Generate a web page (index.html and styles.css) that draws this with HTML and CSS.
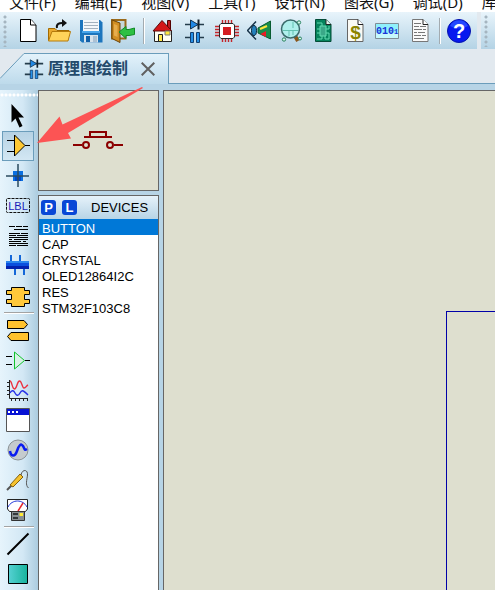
FILE: index.html
```html
<!DOCTYPE html>
<html lang="zh-CN">
  <head>
    <meta charset="UTF-8" />
    <meta name="viewport" content="width=device-width, initial-scale=1.0" />
    <title>原理图绘制</title>
    <link rel="stylesheet" href="styles.css">
  </head>
  <body>
    <nav class="menubar">
      <a href="#">文件(F)</a>
      <a href="#">编辑(E)</a>
      <a href="#">视图(V)</a>
      <a href="#">工具(T)</a>
      <a href="#">设计(N)</a>
      <a href="#">图表(G)</a>
      <a href="#">调试(D)</a>
      <a href="#">库(L)</a>
    </nav>

    <div class="toolbars">
      <div class="toolbar">
        <span class="grip"></span>
        <button class="tool" aria-label="新建">
          <svg class="icon" viewBox="0 0 24 24">
            <path d="M5.500 .5H16l5 5.500V22.500H5.500Z" fill="#fff" stroke="#000"/>
            <path d="M15.500 .5V6H21" fill="#fff" stroke="#000"/>
          </svg>
        </button>
        <button class="tool" aria-label="打开">
          <svg class="icon" viewBox="0 0 24 24">
            <path d="M1.500 21.500V9.500H8L10 11.500H22V14" fill="#e9a92d" stroke="#a46a00"/>
            <path d="M1.500 22L5 12.500H23.500L21 22Z" fill="#ffd35a" stroke="#b57a0b"/>
            <path d="M10 9C9 5 12 3.500 17 4" fill="none" stroke="#111" stroke-width="2"/>
            <path d="M15 0L20 4L15 8Z" fill="#111"/>
          </svg>
        </button>
        <button class="tool" aria-label="保存">
          <svg class="icon" viewBox="0 0 24 24">
            <path d="M1 1H21L23.500 3.500V23.500H3L1 21.500Z" fill="#1c75bd"/>
            <path d="M4 1H20V13H4Z" fill="#f3f7fa"/>
            <path d="M5 3.500H19M5 6.500H19M5 9.500H19" stroke="#a2b1be"/>
            <path d="M3 12H21V14H3Z" fill="#49a5ea"/>
            <path d="M5 16H19V23.500H5Z" fill="#d8e3ec"/>
            <path d="M7 17H11V23H7Z" fill="#1260a8"/>
            <path d="M14 17H18V23H14Z" fill="#acc1d3"/>
          </svg>
        </button>
        <button class="tool" aria-label="关闭">
          <svg class="icon" viewBox="0 0 24 24">
            <path d="M1 1H14.500V19.500H1Z" fill="#c5d8d9" stroke="#9a6a1c" stroke-width="2"/>
            <path d="M1 1L9 4V23.500L1 19.500Z" fill="#d18e22" stroke="#6d4508"/>
            <path d="M3 5L6.500 6.500V18L3 16.500Z" fill="#e6ad4c"/>
            <path d="M8 13L15 7.500V10.500H18L23.500 9V15.500L18 16.500H15V19.500Z" fill="#2dc043" stroke="#128a26"/>
          </svg>
        </button>
        <span class="divider"></span>
        <button class="tool" aria-label="主页">
          <svg class="icon" viewBox="0 0 24 24">
            <path d="M16.500 1.500H19.500V10H16.500Z" fill="#c11c20" stroke="#500"/>
            <path d="M3.500 12V22.500H20.500V12L12 5Z" fill="#fffef2" stroke="#222"/>
            <path d="M2 12L11 1.500L20.500 11.500L15 12Z" fill="#d41619" stroke="#5a0b0b"/>
            <path d="M7.500 15.500H11.500V22.500H7.500Z" fill="#ffe94a" stroke="#222"/>
            <path d="M14 12H19V16H14Z" fill="#ffe93a" stroke="#777"/>
          </svg>
        </button>
        <button class="tool" aria-label="原理图绘制">
          <svg class="icon" viewBox="0 0 24 24">
            <path d="M2 5.500H21M2 18.500H9M14 18.500H21" stroke="#243c4b" stroke-width="1.500"/>
            <path d="M7.500 1V10L15 5.500Z" fill="#2188e4" stroke="#123352"/>
            <path d="M15.500 .5V10.500" stroke="#12212d" stroke-width="2"/>
            <path d="M7.500 13.500H10.500V23.500H7.500ZM13.500 13.500H16.500V23.500H13.500Z" fill="#2590e8" stroke="#123f70"/>
          </svg>
        </button>
        <button class="tool" aria-label="PCB 设计">
          <svg class="icon" viewBox="0 0 24 24">
            <path d="M7.500 1V23M10.500 1V23M13.500 1V23M16.500 1V23M0 7.500H24M0 10.500H24M0 13.500H24M0 16.500H24" stroke="#c4262b" stroke-width="1.400"/>
            <path d="M6 4.500H18L19.500 6V18L18 19.500H6L4.500 18V6Z" fill="#fff" stroke="#27272a"/>
            <path d="M8 8H16V16H8Z" fill="#d41d22"/>
          </svg>
        </button>
        <button class="tool" aria-label="3D 观察器">
          <svg class="icon" viewBox="0 0 24 24">
            <path d="M9 2.500L.5 11.500L9 20.500" fill="#cfe9f8" stroke="#163247" stroke-width="1.500"/>
            <ellipse cx="7" cy="11.500" rx="2.500" ry="5" fill="#2481bd" stroke="#0a253a"/>
            <path d="M11 9L23.500 2V20L11 14Z" fill="#188d4c" stroke="#085c31"/>
            <path d="M13 10L20 7" stroke="#ffe53a" stroke-width="2"/>
            <path d="M13.500 15L19 12V18Z" fill="#ed1b24"/>
          </svg>
        </button>
        <button class="tool" aria-label="Gerber 查看器">
          <svg class="icon" viewBox="0 0 24 24">
            <path d="M16 17L19 22" stroke="#8a571d" stroke-width="4"/>
            <circle cx="11.500" cy="10" r="9" fill="#b0f0ec" stroke="#3b6b6b" stroke-width="1.500"/>
            <path d="M4 11.500H19M10 11.500V17M14 3V9M14 11.500V16" fill="none" stroke="#63c1b0"/>
            <g fill="#d9f5e8" stroke="#278361">
              <circle cx="20" cy="3.500" r="1.700"/>
              <circle cx="5" cy="20.500" r="1.700"/>
              <circle cx="21" cy="19.500" r="1.500"/>
            </g>
          </svg>
        </button>
        <button class="tool" aria-label="设计浏览器">
          <svg class="icon" viewBox="0 0 24 24">
            <path d="M4.500 .5H15L20 5.500V22.500H4.500Z" fill="#06845d" stroke="#034c37"/>
            <path d="M9 7H15V17H9Z" fill="#3aa888"/>
            <path d="M9 7H15V17H9ZM6 4H11V7M6 10H9M15 10H18V7M6 14H9M11 17V20H6M14 17V20H18V14H15" fill="none" stroke="#62dcb2"/>
            <path d="M15 .5V5.500H20" fill="#e6f6ee" stroke="#222"/>
          </svg>
        </button>
        <button class="tool" aria-label="物料清单">
          <svg class="icon" viewBox="0 0 24 24">
            <path d="M4.500 .5H15L20 5.500V22.500H4.500Z" fill="#fafaf4" stroke="#666"/>
            <path d="M15 .5V5.500H20" fill="#fff" stroke="#222"/>
            <text class="dollar" x="12.500" y="20">$</text>
          </svg>
        </button>
        <button class="tool" aria-label="源代码">
          <svg class="icon" viewBox="0 0 24 24">
            <path d="M.5 4.500H23.500V19.500H.5Z" fill="#8ff0fb" stroke="#7e8d96"/>
            <path d="M1 14H23V19H1Z" fill="#c6f8fc"/>
            <text class="bits" x="1" y="15">010<tspan class="bits-small">1</tspan></text>
          </svg>
        </button>
        <button class="tool" aria-label="项目笔记">
          <svg class="icon" viewBox="0 0 24 24">
            <path d="M5.500 .5H16L21 5.500V22.500H5.500Z" fill="#fafafa" stroke="#777"/>
            <path d="M16 .5V5.500H21" fill="#fff" stroke="#222"/>
            <path d="M7 4.500H14M7 7.500H12M13 7.500H19M7 10.500H15M16 10.500H19M7 13.500H10M11 13.500H18M7 16.500H14M15 16.500H19M7 19.500H17" stroke="#777"/>
          </svg>
        </button>
        <span class="divider"></span>
        <button class="tool" aria-label="帮助">
          <svg class="icon" viewBox="0 0 24 24">
            <circle cx="12" cy="12" r="11.500" fill="#0718ef" stroke="#0414ac"/>
            <path d="M3 7A10 10 0 0 1 21 7Q12 12 3 7" fill="#2448ff"/>
            <text class="question" x="12" y="19">?</text>
          </svg>
        </button>
      </div>
      <div class="toolbar toolbar-next">
        <span class="grip"></span>
      </div>
    </div>

    <div class="tabbar">
      <svg class="tab-slope" viewBox="0 0 24 31">
        <path d="M0 25.500L24 .5V31H0Z" fill="url(#tabFill)"/>
        <path d="M0 25.500L24 .5" stroke="#6b9dbb"/>
        <defs>
          <linearGradient id="tabFill" x1="0" y1="0" x2="0" y2="1">
            <stop offset="0" stop-color="#e3f2fb"/>
            <stop offset="1" stop-color="#bddaeb"/>
          </linearGradient>
        </defs>
      </svg>
      <div class="tab">
        <svg class="tab-icon" viewBox="0 0 24 24">
          <path d="M1 5.500H23M1 18.500H9M15 18.500H23" stroke="#243c4b" stroke-width="2"/>
          <path d="M7.500 1V10L15 5.500Z" fill="#2188e4" stroke="#123352"/>
          <path d="M16 .5V10.500" stroke="#12212d" stroke-width="2"/>
          <path d="M7.500 13.500H10.500V23.500H7.500ZM13.500 13.500H16.500V23.500H13.500Z" fill="#2590e8" stroke="#123f70"/>
        </svg>
        <span class="tab-title">原理图绘制</span>
        <button class="tab-close" aria-label="关闭标签">
          <svg viewBox="0 0 14 14"><path d="M.7 .7L13.300 13.300M13.300 .7L.7 13.300" stroke="#606060" stroke-width="2"/></svg>
        </button>
      </div>
      <div class="tab-rest"></div>
    </div>

    <main class="workspace">
      <aside class="toolbox">
        <button class="mode" aria-label="选择模式">
          <svg class="icon" viewBox="0 0 24 24"><path d="M5.500 0V18.500L9.500 14.500L13.500 23.500L16.500 22L12.500 13.500H18Z" fill="#000"/></svg>
        </button>
        <button class="mode active" aria-label="元件模式">
          <svg class="icon" viewBox="0 0 24 24">
            <path d="M1 6.500H8M1 17.500H8M19 11.500H24" stroke="#000"/>
            <path d="M8.500 1V22L19 11.500Z" fill="#ffc933" stroke="#000"/>
          </svg>
        </button>
        <button class="mode" aria-label="结点模式">
          <svg class="icon" viewBox="0 0 24 24">
            <path d="M7 7H17V17H7Z" fill="#0a6fe0"/>
            <path d="M9 12H15V17H9Z" fill="#0047c4"/>
            <path d="M0 12H23M12 0V23" stroke="#2b4b5f" stroke-width="1.500"/>
          </svg>
        </button>
        <button class="mode" aria-label="连线标号模式">
          <svg class="icon" viewBox="0 0 24 24">
            <rect x=".5" y="4.500" width="23" height="14" rx="1" fill="none" stroke="#111" stroke-dasharray="3 1"/>
            <text class="lbl" x="12" y="16">LBL</text>
          </svg>
        </button>
        <button class="mode" aria-label="文本脚本模式">
          <svg class="icon" viewBox="0 0 24 24">
            <path d="M3 2.500H9M10 2.500H16M17 2.500H22M8 5.500H22M3 9.500H14M15 9.500H22M3 11.500H10M11 11.500H22M3 13.500H22M3 15.500H6M8 15.500H22M3 17.500H15M17 17.500H20M3 19.500H22M3 21.500H10M11 21.500H22" stroke="#000"/>
          </svg>
        </button>
        <button class="mode" aria-label="总线模式">
          <svg class="icon" viewBox="0 0 24 24">
            <path d="M5 1V8M14 1V8M9 14V21M18 14V21" stroke="#1467d8" stroke-width="2"/>
            <path d="M0 7H23V15H0Z" fill="#0b4fdd"/>
            <path d="M0 7H23V9H0Z" fill="#2b86ee"/>
            <path d="M0 12H23V15H0Z" fill="#0321ad"/>
          </svg>
        </button>
        <button class="mode" aria-label="子电路模式">
          <svg class="icon" viewBox="0 0 24 24">
            <path d="M5.500 3.500H18.500V6.500H23.500V10.500H18.500V15.500H23.500V19.500H18.500V22.500H5.500V19.500H.5V15.500H5.500V10.500H.5V6.500H5.500Z" fill="#ffc83a" stroke="#000"/>
          </svg>
        </button>
        <span class="rule"></span>
        <button class="mode" aria-label="终端模式">
          <svg class="icon" viewBox="0 0 24 24">
            <path d="M1.500 2.500H18L21.500 6.500L18 10.500H1.500ZM22.500 14.500H5L1.500 18.500L5 22.500H22.500Z" fill="#ffc22e" stroke="#000"/>
          </svg>
        </button>
        <button class="mode" aria-label="器件引脚模式">
          <svg class="icon" viewBox="0 0 24 24">
            <path d="M0 8.500H6M0 16.500H6M19 12.500H24" stroke="#000"/>
            <path d="M8.500 4V21L18.500 12.500Z" fill="#d7f1e5" stroke="#12c32d"/>
          </svg>
        </button>
        <button class="mode" aria-label="图表模式">
          <svg class="icon" viewBox="0 0 24 24">
            <path d="M3.500 2V20.500H22M1 4.500H3M1 8.500H3M1 12.500H3M1 16.500H3M5.500 21V23M9.500 21V23M13.500 21V23M17.500 21V23M21.500 21V23" fill="none" stroke="#222"/>
            <path d="M4 3C6 3 6 11 8.500 11S11 3 13.500 3S16 10 18 10S20 8 22 7" fill="none" stroke="#eb3340" stroke-width="1.400"/>
            <path d="M4 15C6 11 8 13 9 15S12 19 14 15S18 13 22 17" fill="none" stroke="#2732e8" stroke-width="1.400"/>
          </svg>
        </button>
        <button class="mode" aria-label="弹出窗口模式">
          <svg class="icon" viewBox="0 0 24 24">
            <path d="M.5 .5H23.500V23.500H.5Z" fill="#fff" stroke="#555"/>
            <path d="M1 1H23V7H1Z" fill="#0712d4"/>
            <path d="M2 3H4V5H2ZM6 3H8V5H6ZM10 3H12V5H10Z" fill="#fff"/>
          </svg>
        </button>
        <button class="mode" aria-label="激励源模式">
          <svg class="icon" viewBox="0 0 24 24">
            <circle cx="12" cy="12" r="10" fill="#c5cbce" stroke="#8b9296"/>
            <path d="M4 13C5 19 9 19 11 13S15 5 17 8S18 13 21 11" fill="none" stroke="#0a1cf0" stroke-width="2.500"/>
          </svg>
        </button>
        <button class="mode" aria-label="探针模式">
          <svg class="icon" viewBox="0 0 24 24">
            <path d="M1 22L7 16" stroke="#555" stroke-width="2"/>
            <path d="M4 17L14 6L17 9L7 19Z" fill="#f5c22e" stroke="#83610f"/>
            <path d="M15 7C16 1 22 1 21.500 7C21 12 19 17 22.500 20" fill="none" stroke="#555"/>
          </svg>
        </button>
        <button class="mode" aria-label="仪表模式">
          <svg class="icon" viewBox="0 0 24 24">
            <path d="M1.500 1.500H21.500V11L19.500 13.500H3.500L1.500 11Z" fill="#fff" stroke="#222"/>
            <path d="M2 9C6 1 17 1 21 9" fill="none" stroke="#1b32d8"/>
            <path d="M12 13L17 5" stroke="#e8292d" stroke-width="1.500"/>
            <path d="M5.500 13.500H18.500V22.500H5.500Z" fill="#888f92" stroke="#333"/>
            <path d="M7 15H12V17H7ZM7 19H12V21H7Z" fill="#33383b"/>
            <path d="M13.500 15H17V18H13.500Z" fill="#ffeb36"/>
          </svg>
        </button>
        <span class="rule"></span>
        <button class="mode" aria-label="二维直线">
          <svg class="icon" viewBox="0 0 24 24"><path d="M1.500 22.500L22.500 1.500" stroke="#000" stroke-width="2"/></svg>
        </button>
        <button class="mode" aria-label="二维方框">
          <svg class="icon" viewBox="0 0 24 24">
            <defs>
              <linearGradient id="boxFill" x1="0" y1="0" x2="1" y2="0">
                <stop offset="0" stop-color="#56d1d3"/>
                <stop offset="1" stop-color="#17b39c"/>
              </linearGradient>
            </defs>
            <path d="M2.500 2.500H21.500V21.500H2.500Z" fill="url(#boxFill)" stroke="#000"/>
          </svg>
        </button>
      </aside>

      <section class="side">
        <div class="preview">
          <svg class="preview-part" viewBox="0 0 52 20">
            <g fill="none" stroke="#8b0000" stroke-width="2">
              <path d="M0 14H9M41 14H50M11 6H39M17 6V1H33V6"/>
              <circle cx="13" cy="14" r="3"/>
              <circle cx="37" cy="14" r="3"/>
            </g>
          </svg>
        </div>
        <div class="devices">
          <div class="devices-head">
            <button class="badge">P</button>
            <button class="badge">L</button>
            <span class="devices-title">DEVICES</span>
          </div>
          <ul class="device-list">
            <li><button class="device selected">BUTTON</button></li>
            <li><button class="device">CAP</button></li>
            <li><button class="device">CRYSTAL</button></li>
            <li><button class="device">OLED12864I2C</button></li>
            <li><button class="device">RES</button></li>
            <li><button class="device">STM32F103C8</button></li>
          </ul>
        </div>
      </section>

      <section class="canvas">
        <div class="sheet"></div>
      </section>

      <svg class="pointer" viewBox="0 0 108 58">
        <path d="M1 57L23.500 30.500L26.500 38.500L106 1L107 2L32 47L35 52.500Z" fill="#fc5454"/>
      </svg>
    </main>
  </body>
</html>
```

FILE: styles.css
```css
* {
  margin: 0;
  padding: 0;
  box-sizing: border-box;
}
body {
  font-family: "Liberation Sans", "Noto Sans CJK SC", sans-serif;
  font-size: 13px;
  height: 100vh;
  display: flex;
  flex-direction: column;
  overflow: hidden;
  background: #e2e9ef;
}
button {
  border: none;
  background: none;
  font: inherit;
}
svg {
  display: block;
}
.icon {
  width: 24px;
  height: 24px;
}

/* 菜单栏 */
.menubar {
  display: flex;
  align-items: flex-end;
  gap: 19px;
  height: 12px;
  padding-left: 9px;
  overflow: hidden;
  background: #fff;
}
.menubar a {
  flex-shrink: 0;
  font-family: "Noto Sans", "Noto Sans CJK SC", sans-serif;
  font-size: 15px;
  line-height: 20px;
  color: #111;
  text-decoration: none;
  white-space: nowrap;
}

/* 工具栏 */
.toolbars {
  display: flex;
  gap: 4px;
  height: 37px;
  flex-shrink: 0;
}
.toolbar {
  display: flex;
  align-items: center;
  padding: 0 2px 0 3px;
  background: linear-gradient(#e8f4fb, #b4d3e5);
}
.toolbar-next {
  flex: 1;
}
.grip {
  width: 8px;
  height: 32px;
  background: radial-gradient(circle at 2px 2px, #a5b5c0 1px, transparent 2px) 0 0 / 8px 5px;
}
.tool {
  width: 32px;
  height: 32px;
  display: flex;
  align-items: center;
  justify-content: center;
}
.divider {
  width: 8px;
  height: 26px;
  background: linear-gradient(90deg, transparent 4px, #a3abb0 4px, #a3abb0 5px, #fff 5px, #fff 6px, transparent 6px);
}
.dollar {
  font: bold 19px "Liberation Sans", sans-serif;
  fill: #8c8500;
  text-anchor: middle;
}
.bits {
  font: bold 10px "Liberation Mono", monospace;
  fill: #1c35d8;
}
.bits-small {
  font-size: 7px;
}
.question {
  font: bold 20px "Liberation Sans", sans-serif;
  fill: #fff;
  text-anchor: middle;
}
.lbl {
  font: 11px "Liberation Sans", sans-serif;
  fill: #1a1ab8;
  text-anchor: middle;
}

/* 标签页 */
.tabbar {
  display: flex;
  align-items: flex-end;
  height: 35px;
  flex-shrink: 0;
}
.tab-slope {
  width: 24px;
  height: 31px;
}
.tab {
  display: flex;
  align-items: center;
  height: 31px;
  padding-right: 13px;
  border-top: 1px solid #6b9dbb;
  border-right: 1px solid #6b9dbb;
  background: linear-gradient(#e3f2fb, #bddaeb);
}
.tab-icon {
  width: 20px;
  height: 20px;
}
.tab-title {
  padding-left: 4px;
  font-size: 16px;
  font-weight: bold;
  line-height: 24px;
  color: #234a6b;
}
.tab-close {
  padding-left: 13px;
}
.tab-close svg {
  width: 14px;
  height: 14px;
}
.tab-rest {
  flex: 1;
  border-bottom: 1px solid #6b9dbb;
}

/* 工作区 */
.workspace {
  position: relative;
  display: flex;
  flex: 1;
  min-height: 0;
  padding-top: 6px;
  background: #b7d4e6;
}
.toolbox {
  width: 38px;
  flex-shrink: 0;
  display: flex;
  flex-direction: column;
  padding: 11px 4px 0 2px;
  overflow: hidden;
  background:
    radial-gradient(circle at 2px 2px, #fff 1px, transparent 2px) 0 3px / 4px 4px repeat-x,
    linear-gradient(90deg, #e6f4fc, #d3e8f5 60%, #acccdf);
}
.mode {
  width: 32px;
  height: 30px;
  flex-shrink: 0;
  display: flex;
  align-items: center;
  justify-content: center;
}
.mode.active {
  border: 1px solid #6b9dbb;
  background: linear-gradient(#b6d2e4, #d3e7f3);
}
.rule {
  height: 4px;
  flex-shrink: 0;
  margin: 0 0 0 2px;
  background: linear-gradient(transparent 1px, #a3a3a3 1px, #a3a3a3 2px, #fff 2px, #fff 3px, transparent 3px);
}
.side {
  width: 121px;
  flex-shrink: 0;
  display: flex;
  flex-direction: column;
  gap: 4px;
}
.preview {
  height: 101px;
  display: flex;
  align-items: center;
  justify-content: center;
  border: 1px solid #666;
  background: #dedfcf;
}
.preview-part {
  width: 52px;
  height: 20px;
}
.devices {
  flex: 1;
  border: 1px solid #666;
  border-bottom: none;
  background: #fff;
}
.devices-head {
  display: flex;
  align-items: center;
  gap: 6px;
  height: 23px;
  padding-left: 2px;
  background: linear-gradient(#e6f2fa, #b7d4e6);
}
.badge {
  width: 15px;
  height: 15px;
  border-radius: 3px;
  background: #0847d6;
  color: #fff;
  font-size: 13px;
  font-weight: bold;
  line-height: 15px;
}
.devices-title {
  padding-left: 8px;
}
.device-list {
  list-style: none;
}
.device {
  display: block;
  width: 100%;
  height: 16px;
  padding: 2px 0 0 3px;
  line-height: 16px;
  text-align: left;
  color: #000;
}
.device.selected {
  background: #0078d7;
  color: #fff;
}
.canvas {
  flex: 1;
  display: flex;
  margin-left: 4px;
  border-top: 1px solid #666;
  border-left: 1px solid #666;
  background: #dedfcf;
}
.sheet {
  flex: 1;
  margin: 220px 0 0 282px;
  border-top: 1px solid #0000a8;
  border-left: 1px solid #0000a8;
}
.pointer {
  position: absolute;
  left: 36px;
  top: 2px;
  width: 108px;
  height: 58px;
}
```
